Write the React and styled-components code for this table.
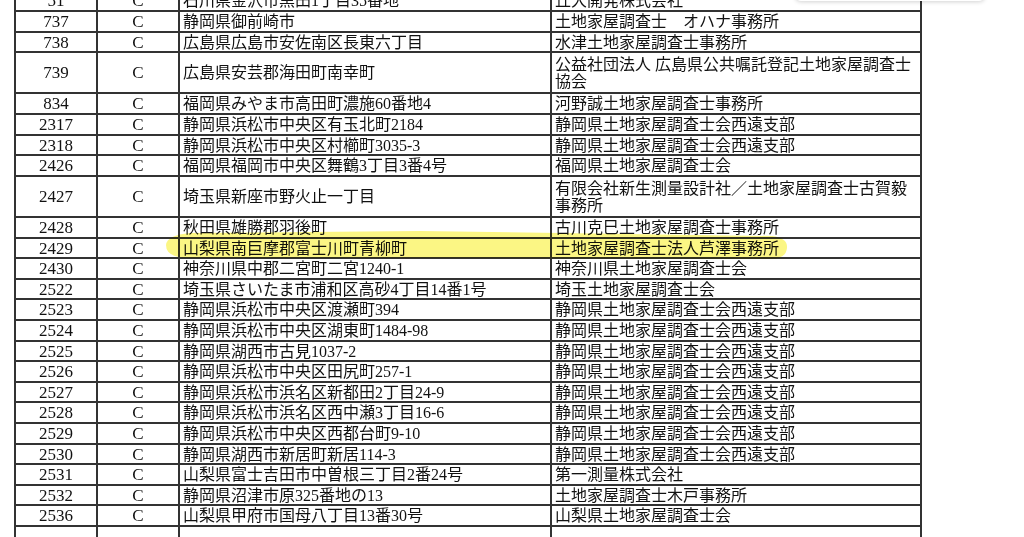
import styled, { createGlobalStyle } from 'styled-components'

const GlobalStyle = createGlobalStyle`
  html, body {
    margin: 0;
    padding: 0;
    background: #fff;
    overflow: hidden;
  }
`

const SEIEN = '静岡県土地家屋調査士会西遠支部'
const PITCH = 20.6
const FIRST_LINE = 10

const rows = [
  ['51', '石川県金沢市黒田1丁目35番地', ['丘大開発株式会社']],
  ['737', '静岡県御前崎市', ['土地家屋調査士　オハナ事務所']],
  ['738', '広島県広島市安佐南区長東六丁目', ['水津土地家屋調査士事務所']],
  ['739', '広島県安芸郡海田町南幸町', ['公益社団法人 広島県公共嘱託登記土地家屋調査士', '協会']],
  ['834', '福岡県みやま市高田町濃施60番地4', ['河野誠土地家屋調査士事務所']],
  ['2317', '静岡県浜松市中央区有玉北町2184', [SEIEN]],
  ['2318', '静岡県浜松市中央区村櫛町3035-3', [SEIEN]],
  ['2426', '福岡県福岡市中央区舞鶴3丁目3番4号', ['福岡県土地家屋調査士会']],
  ['2427', '埼玉県新座市野火止一丁目', ['有限会社新生測量設計社／土地家屋調査士古賀毅', '事務所']],
  ['2428', '秋田県雄勝郡羽後町', ['古川克巳土地家屋調査士事務所']],
  ['2429', '山梨県南巨摩郡富士川町青柳町', ['土地家屋調査士法人芦澤事務所']],
  ['2430', '神奈川県中郡二宮町二宮1240-1', ['神奈川県土地家屋調査士会']],
  ['2522', '埼玉県さいたま市浦和区高砂4丁目14番1号', ['埼玉土地家屋調査士会']],
  ['2523', '静岡県浜松市中央区渡瀬町394', [SEIEN]],
  ['2524', '静岡県浜松市中央区湖東町1484-98', [SEIEN]],
  ['2525', '静岡県湖西市古見1037-2', [SEIEN]],
  ['2526', '静岡県浜松市中央区田尻町257-1', [SEIEN]],
  ['2527', '静岡県浜松市浜名区新都田2丁目24-9', [SEIEN]],
  ['2528', '静岡県浜松市浜名区西中瀬3丁目16-6', [SEIEN]],
  ['2529', '静岡県浜松市中央区西都台町9-10', [SEIEN]],
  ['2530', '静岡県湖西市新居町新居114-3', [SEIEN]],
  ['2531', '山梨県富士吉田市中曽根三丁目2番24号', ['第一測量株式会社']],
  ['2532', '静岡県沼津市原325番地の13', ['土地家屋調査士木戸事務所']],
  ['2536', '山梨県甲府市国母八丁目13番30号', ['山梨県土地家屋調査士会']],
  ['', '', ['']],
]

// row heights are whole pixels; spread the 20.6px pitch so lines land where the scan has them
function rowHeights() {
  let units = -1
  return rows.map(([, , office]) => {
    const top = Math.round(FIRST_LINE + units * PITCH)
    units += office.length
    const bottom = Math.round(FIRST_LINE + units * PITCH)
    return bottom - top
  })
}

export default function App() {
  const heights = rowHeights()
  return (
    <Page>
      <GlobalStyle />
      <Sheet>
        <colgroup>
          <Col $w={82} />
          <Col $w={82} />
          <Col $w={372} />
          <Col $w={370} />
        </colgroup>
        <tbody>
          {rows.map(([no, addr, office], i) => (
            <Row key={i} $h={heights[i]}>
              <NumCell>{no}</NumCell>
              <NumCell>{no ? 'C' : ''}</NumCell>
              <TextCell>{addr}</TextCell>
              <TextCell>
                {office.map((line, j) => (
                  <Line key={j}>{line || '\u00a0'}</Line>
                ))}
              </TextCell>
            </Row>
          ))}
        </tbody>
      </Sheet>
      <PopupEdge />
      <Marker width="1024" height="537" viewBox="0 0 1024 537">
        <path
          d="M166,245 Q167,235 190,233 L420,231 L772,236 Q788,238 787,248 Q786,259 770,259 L420,258 L190,258 Q166,258 166,245 Z"
          fill="rgb(250, 242, 80)"
          fillOpacity="0.7"
        />
      </Marker>
    </Page>
  )
}

const Page = styled.div`
  position: relative;
  width: 1024px;
  height: 537px;
  overflow: hidden;
  background: #fff;
`
const Sheet = styled.table`
  margin: -11px 0 0 14px;
  width: 906px;
  table-layout: fixed;
  border-collapse: collapse;
  font-family: "Liberation Serif", "Noto Sans CJK JP", serif;
  font-size: 16px;
  color: #111;
`
const Col = styled.col`
  width: ${p => p.$w}px;
`
const Row = styled.tr`
  height: ${p => p.$h}px;
`
const Cell = styled.td`
  border: 2px solid #333;
  padding: 0;
  line-height: 17px;
  vertical-align: middle;
  white-space: nowrap;
  overflow: hidden;
`
const NumCell = styled(Cell)`
  text-align: center;
  font-size: 17px;
`
const TextCell = styled(Cell)`
  text-align: left;
  padding-left: 3px;
`
const Line = styled.div`
  line-height: 17px;
`
const PopupEdge = styled.div`
  position: absolute;
  top: -20px;
  left: 795px;
  width: 190px;
  height: 21px;
  background: #fff;
  border-radius: 0 0 6px 6px;
  box-shadow: 0 1px 4px rgba(0, 0, 0, 0.18);
`
const Marker = styled.svg`
  position: absolute;
  top: 0;
  left: 0;
  pointer-events: none;
  mix-blend-mode: multiply;
`
